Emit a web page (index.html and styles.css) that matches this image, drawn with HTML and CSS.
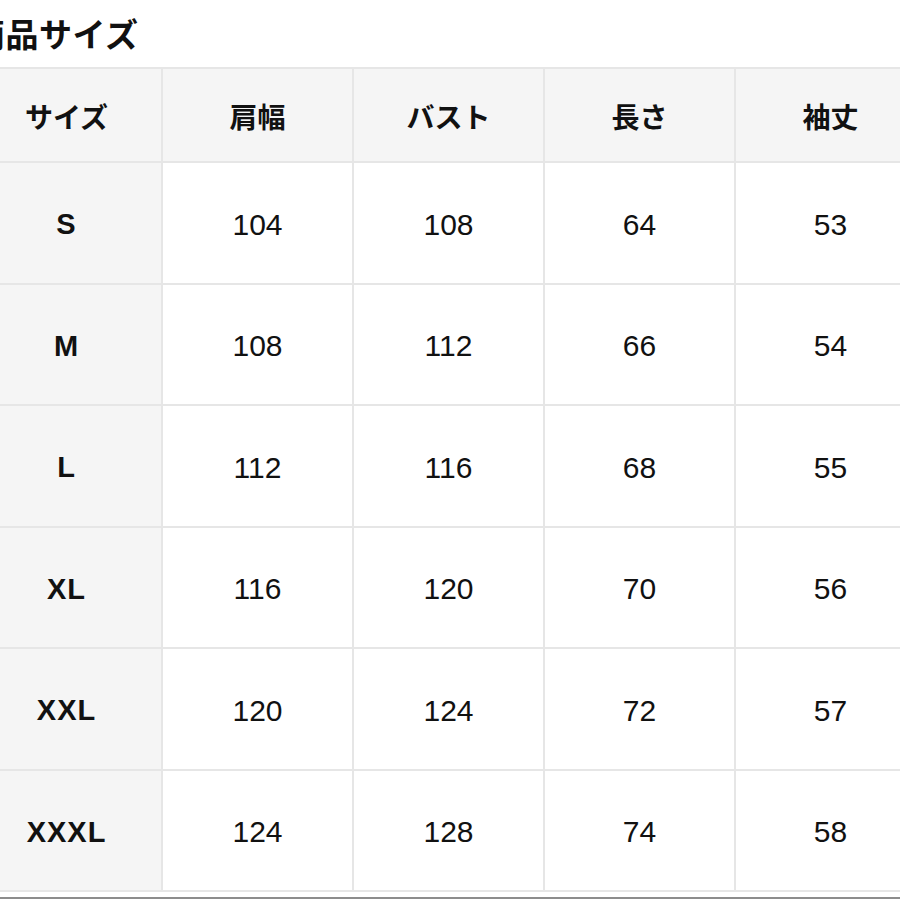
FILE: index.html
```html
<!DOCTYPE html>
<html lang="ja">
<head>
<meta charset="utf-8">
<link rel="stylesheet" href="styles.css">
</head>
<body>
<div class="page">
  <h1 class="title">商品サイズ</h1>
  <div class="grid">
    <div class="cell head">サイズ</div>
    <div class="cell head">肩幅</div>
    <div class="cell head">バスト</div>
    <div class="cell head">長さ</div>
    <div class="cell head">袖丈</div>

    <div class="cell size">S</div><div class="cell num">104</div><div class="cell num">108</div><div class="cell num">64</div><div class="cell num">53</div>
    <div class="cell size">M</div><div class="cell num">108</div><div class="cell num">112</div><div class="cell num">66</div><div class="cell num">54</div>
    <div class="cell size">L</div><div class="cell num">112</div><div class="cell num">116</div><div class="cell num">68</div><div class="cell num">55</div>
    <div class="cell size">XL</div><div class="cell num">116</div><div class="cell num">120</div><div class="cell num">70</div><div class="cell num">56</div>
    <div class="cell size">XXL</div><div class="cell num">120</div><div class="cell num">124</div><div class="cell num">72</div><div class="cell num">57</div>
    <div class="cell size">XXXL</div><div class="cell num">124</div><div class="cell num">128</div><div class="cell num">74</div><div class="cell num">58</div>
  </div>
  <div class="rule"></div>
</div>
</body>
</html>
```
FILE: styles.css
```css
html, body {
  margin: 0;
  padding: 0;
  background: #ffffff;
  overflow: hidden;
}
.page {
  margin-left: -28px;
  width: 960px;
  color: #111111;
  font-family: "Liberation Sans", "Noto Sans CJK JP", sans-serif;
}
.title {
  margin: 0;
  height: 67px;
  line-height: 67px;
  font-family: "Noto Sans CJK JP", sans-serif;
  font-size: 33px;
  font-weight: 700;
  letter-spacing: 0.5px;
}
.grid {
  display: grid;
  grid-template-columns: repeat(5, 191px);
  grid-template-rows: 94px repeat(6, 121.5px);
  border-top: 2px solid #e6e6e6;
}
.cell {
  box-sizing: border-box;
  border-right: 2px solid #e6e6e6;
  border-bottom: 2px solid #e6e6e6;
  display: flex;
  align-items: center;
  justify-content: center;
  background: #ffffff;
}
.head {
  background: #f5f5f5;
  font-family: "Noto Sans CJK JP", sans-serif;
  font-size: 28px;
  font-weight: 700;
  padding-top: 2px;
}
.size {
  background: #f5f5f5;
  font-size: 29px;
  font-weight: 700;
  letter-spacing: 1px;
  padding-top: 4px;
}
.num {
  font-size: 30px;
  font-weight: 400;
  padding-top: 4px;
}
.rule {
  margin-top: 5px;
  border-top: 2px solid #8c8c8c;
}
```
